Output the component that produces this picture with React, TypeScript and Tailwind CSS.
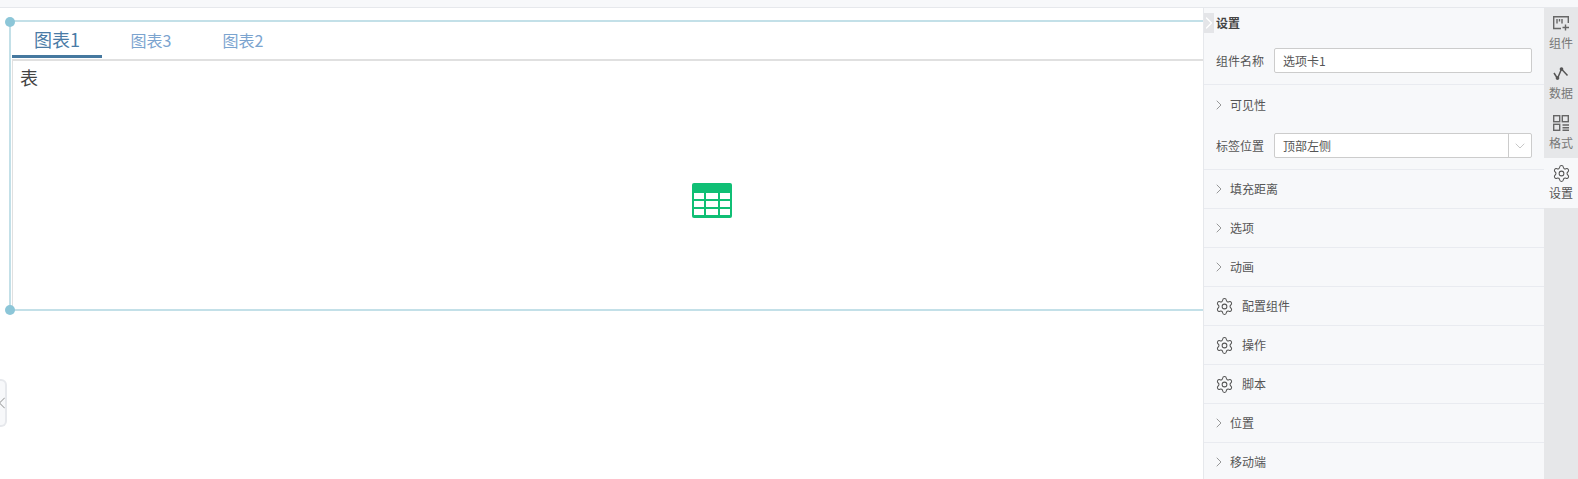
import React from 'react';
import { ChevronRight, ChevronLeft, ChevronDown, Settings } from 'lucide-react';

const FONT = "font-['Noto_Sans_CJK_SC','Liberation_Sans',sans-serif]";

const Row = ({ label }: { label: string }) => (
  <div className="h-[39px] flex items-center pl-[7px] border-b border-[#e9ebf0]">
    <ChevronRight size={16} strokeWidth={1} className="text-[#666]" />
    <span className="ml-[3px] text-[12px] text-[#555]">{label}</span>
  </div>
);

const GearRow = ({ label }: { label: string }) => (
  <div className="h-[39px] flex items-center pl-[11px] border-b border-[#e9ebf0]">
    <Settings size={19} strokeWidth={1.3} className="text-[#555]" />
    <span className="ml-[8px] text-[12px] text-[#555]">{label}</span>
  </div>
);

const RailItem = ({ label, active, icon }: { label: string; active?: boolean; icon: React.ReactNode }) => (
  <div className={active ? 'h-[50px] flex flex-col items-center pt-[5px] bg-[#f7f8fa] text-[#555]' : 'h-[50px] flex flex-col items-center pt-[5px] text-[#777]'}>
    <div className="h-[20px] flex items-center justify-center">{icon}</div>
    <span className="text-[12px] leading-[18px] mt-[1px]">{label}</span>
  </div>
);

const ComponentIcon = () => (
  <svg width="16" height="15" viewBox="0 0 16 15" fill="none" stroke="#666" strokeWidth="1.4">
    <path d="M8 12.5H0.7V0.7h14.6V7" />
    <path d="M4 3v4.5M6.5 3v2.5M9 3v4.5" />
    <path d="M12.5 8.5v6M9.5 11.5h6.5" />
  </svg>
);

const DataIcon = () => (
  <svg width="16" height="13" viewBox="0 0 16 13" fill="none" stroke="#555" strokeWidth="1.5">
    <path d="M1 6l3.5 5.5L8.5 2l6 6.5" />
    <circle cx="4.5" cy="11" r="1.1" fill="#555" />
    <circle cx="8.5" cy="2" r="1.1" fill="#555" />
  </svg>
);

const FormatIcon = () => (
  <svg width="16" height="16" viewBox="0 0 16 16" fill="none" stroke="#666" strokeWidth="1.4">
    <rect x="0.7" y="0.7" width="6" height="6" />
    <rect x="9.3" y="0.7" width="6" height="6" />
    <rect x="0.7" y="9.3" width="6" height="6" />
    <path d="M9.5 10h6.5M9.5 12.7h6.5M9.5 15.3h6.5" />
  </svg>
);

const TableIcon = () => (
  <svg width="40" height="35" viewBox="0 0 40 35">
    <path d="M2 0h36a2 2 0 0 1 2 2v31a2 2 0 0 1-2 2H2a2 2 0 0 1-2-2V2a2 2 0 0 1 2-2z" fill="#10bf75" />
    <g fill="#fff">
      <rect x="2" y="10" width="10" height="6" />
      <rect x="14" y="10" width="12" height="6" />
      <rect x="28" y="10" width="10" height="6" />
      <rect x="2" y="18" width="10" height="6" />
      <rect x="14" y="18" width="12" height="6" />
      <rect x="28" y="18" width="10" height="6" />
      <rect x="2" y="26" width="10" height="6" />
      <rect x="14" y="26" width="12" height="6" />
      <rect x="28" y="26" width="10" height="6" />
    </g>
  </svg>
);

export default function App() {
  return (
    <div className={`${FONT} w-full h-[479px] flex flex-col overflow-hidden bg-white`}>
      <div className="h-[8px] shrink-0 bg-[#f7f8fa] border-b border-[#e6e8ec]" />

      <div className="flex flex-1 min-h-0">
        {/* Canvas */}
        <div className="relative flex-1 min-w-0 overflow-hidden pt-[12px] pl-[9px]">
          <div className="relative w-[1404px] h-[291px] border-2 border-[#c3e0e8]">
            <div className="absolute -left-[6px] -top-[5px] w-[10px] h-[10px] rounded-full bg-[#8cc6d8]" />
            <div className="absolute -left-[6px] -bottom-[6px] w-[10px] h-[10px] rounded-full bg-[#8cc6d8]" />
            <div className="flex h-[37px] box-content ml-[1px] border-b-[2px] border-[#e0e0e0]">
              <div className="w-[90px] h-[36px] border-b-[3px] border-[#45789f] flex justify-center text-[18px] leading-[34px] text-[#4a7ba6] shrink-0">图表1</div>
              <div className="w-[98px] flex justify-center text-[16px] leading-[36px] text-[#7ba4cf] shrink-0">图表3</div>
              <div className="w-[86px] flex justify-center text-[16px] leading-[36px] text-[#7ba4cf] shrink-0">图表2</div>
            </div>
            <div className="ml-[1px] border-l border-[#e0e0e0] h-[250px]">
              <div className="px-[7px] text-[18px] leading-[32px] text-[#444]">表</div>
              <div className="flex justify-center mt-[90px]">
                <TableIcon />
              </div>
            </div>
          </div>
          <div className="absolute left-0 top-[371px] w-[7px] h-[48px] bg-[#f7f8fa] border-2 border-l-0 border-[#e6e8ec] rounded-r-[6px] overflow-hidden">
            <ChevronLeft size={20} strokeWidth={1} className="absolute -left-[8px] top-[12px] text-[#777]" />
          </div>
        </div>

        {/* Settings panel */}
        <div className="relative w-[341px] shrink-0 bg-[#f7f8fa] border-l border-[#e6e8ec]">
          <div className="absolute left-0 top-[5px] w-[10px] h-[20px] bg-[#e4e5e8] flex items-center justify-center">
            <ChevronRight size={20} strokeWidth={1.5} className="text-white shrink-0" />
          </div>
          <div className="h-[30px] pl-[12px] flex items-center text-[12px] font-bold text-[#444]">设置</div>
          <div className="h-[47px] flex items-start pl-[12px] pr-[12px] pt-[10px] border-b border-[#e9ebf0]">
            <span className="w-[58px] leading-[25px] text-[12px] text-[#555]">组件名称</span>
            <div className="flex-1 h-[25px] bg-white border border-[#ccc] rounded-[2px] pl-[8px] leading-[23px] text-[12px] text-[#555]">选项卡1</div>
          </div>
          <div className="h-[39px] flex items-center pl-[7px]">
            <ChevronRight size={16} strokeWidth={1} className="text-[#666]" />
            <span className="ml-[3px] text-[12px] text-[#555]">可见性</span>
          </div>
          <div className="h-[46px] flex items-start pl-[12px] pr-[12px] pt-[9px] border-b border-[#e9ebf0]">
            <span className="w-[58px] leading-[25px] text-[12px] text-[#555]">标签位置</span>
            <div className="flex-1 h-[25px] bg-white border border-[#ccc] rounded-[2px] flex">
              <span className="flex-1 pl-[8px] leading-[23px] text-[12px] text-[#555]">顶部左侧</span>
              <span className="w-[23px] border-l border-[#ccc] flex items-center justify-center">
                <ChevronDown size={16} strokeWidth={1} className="text-[#aaa]" />
              </span>
            </div>
          </div>
          <Row label="填充距离" />
          <Row label="选项" />
          <Row label="动画" />
          <GearRow label="配置组件" />
          <GearRow label="操作" />
          <GearRow label="脚本" />
          <Row label="位置" />
          <Row label="移动端" />
        </div>

        {/* Right rail */}
        <div className="w-[34px] shrink-0 bg-[#e6e7e9]">
          <RailItem label="组件" icon={<ComponentIcon />} />
          <RailItem label="数据" icon={<DataIcon />} />
          <RailItem label="格式" icon={<FormatIcon />} />
          <RailItem label="设置" active icon={<Settings size={19} strokeWidth={1.3} className="text-[#555]" />} />
        </div>
      </div>
    </div>
  );
}
